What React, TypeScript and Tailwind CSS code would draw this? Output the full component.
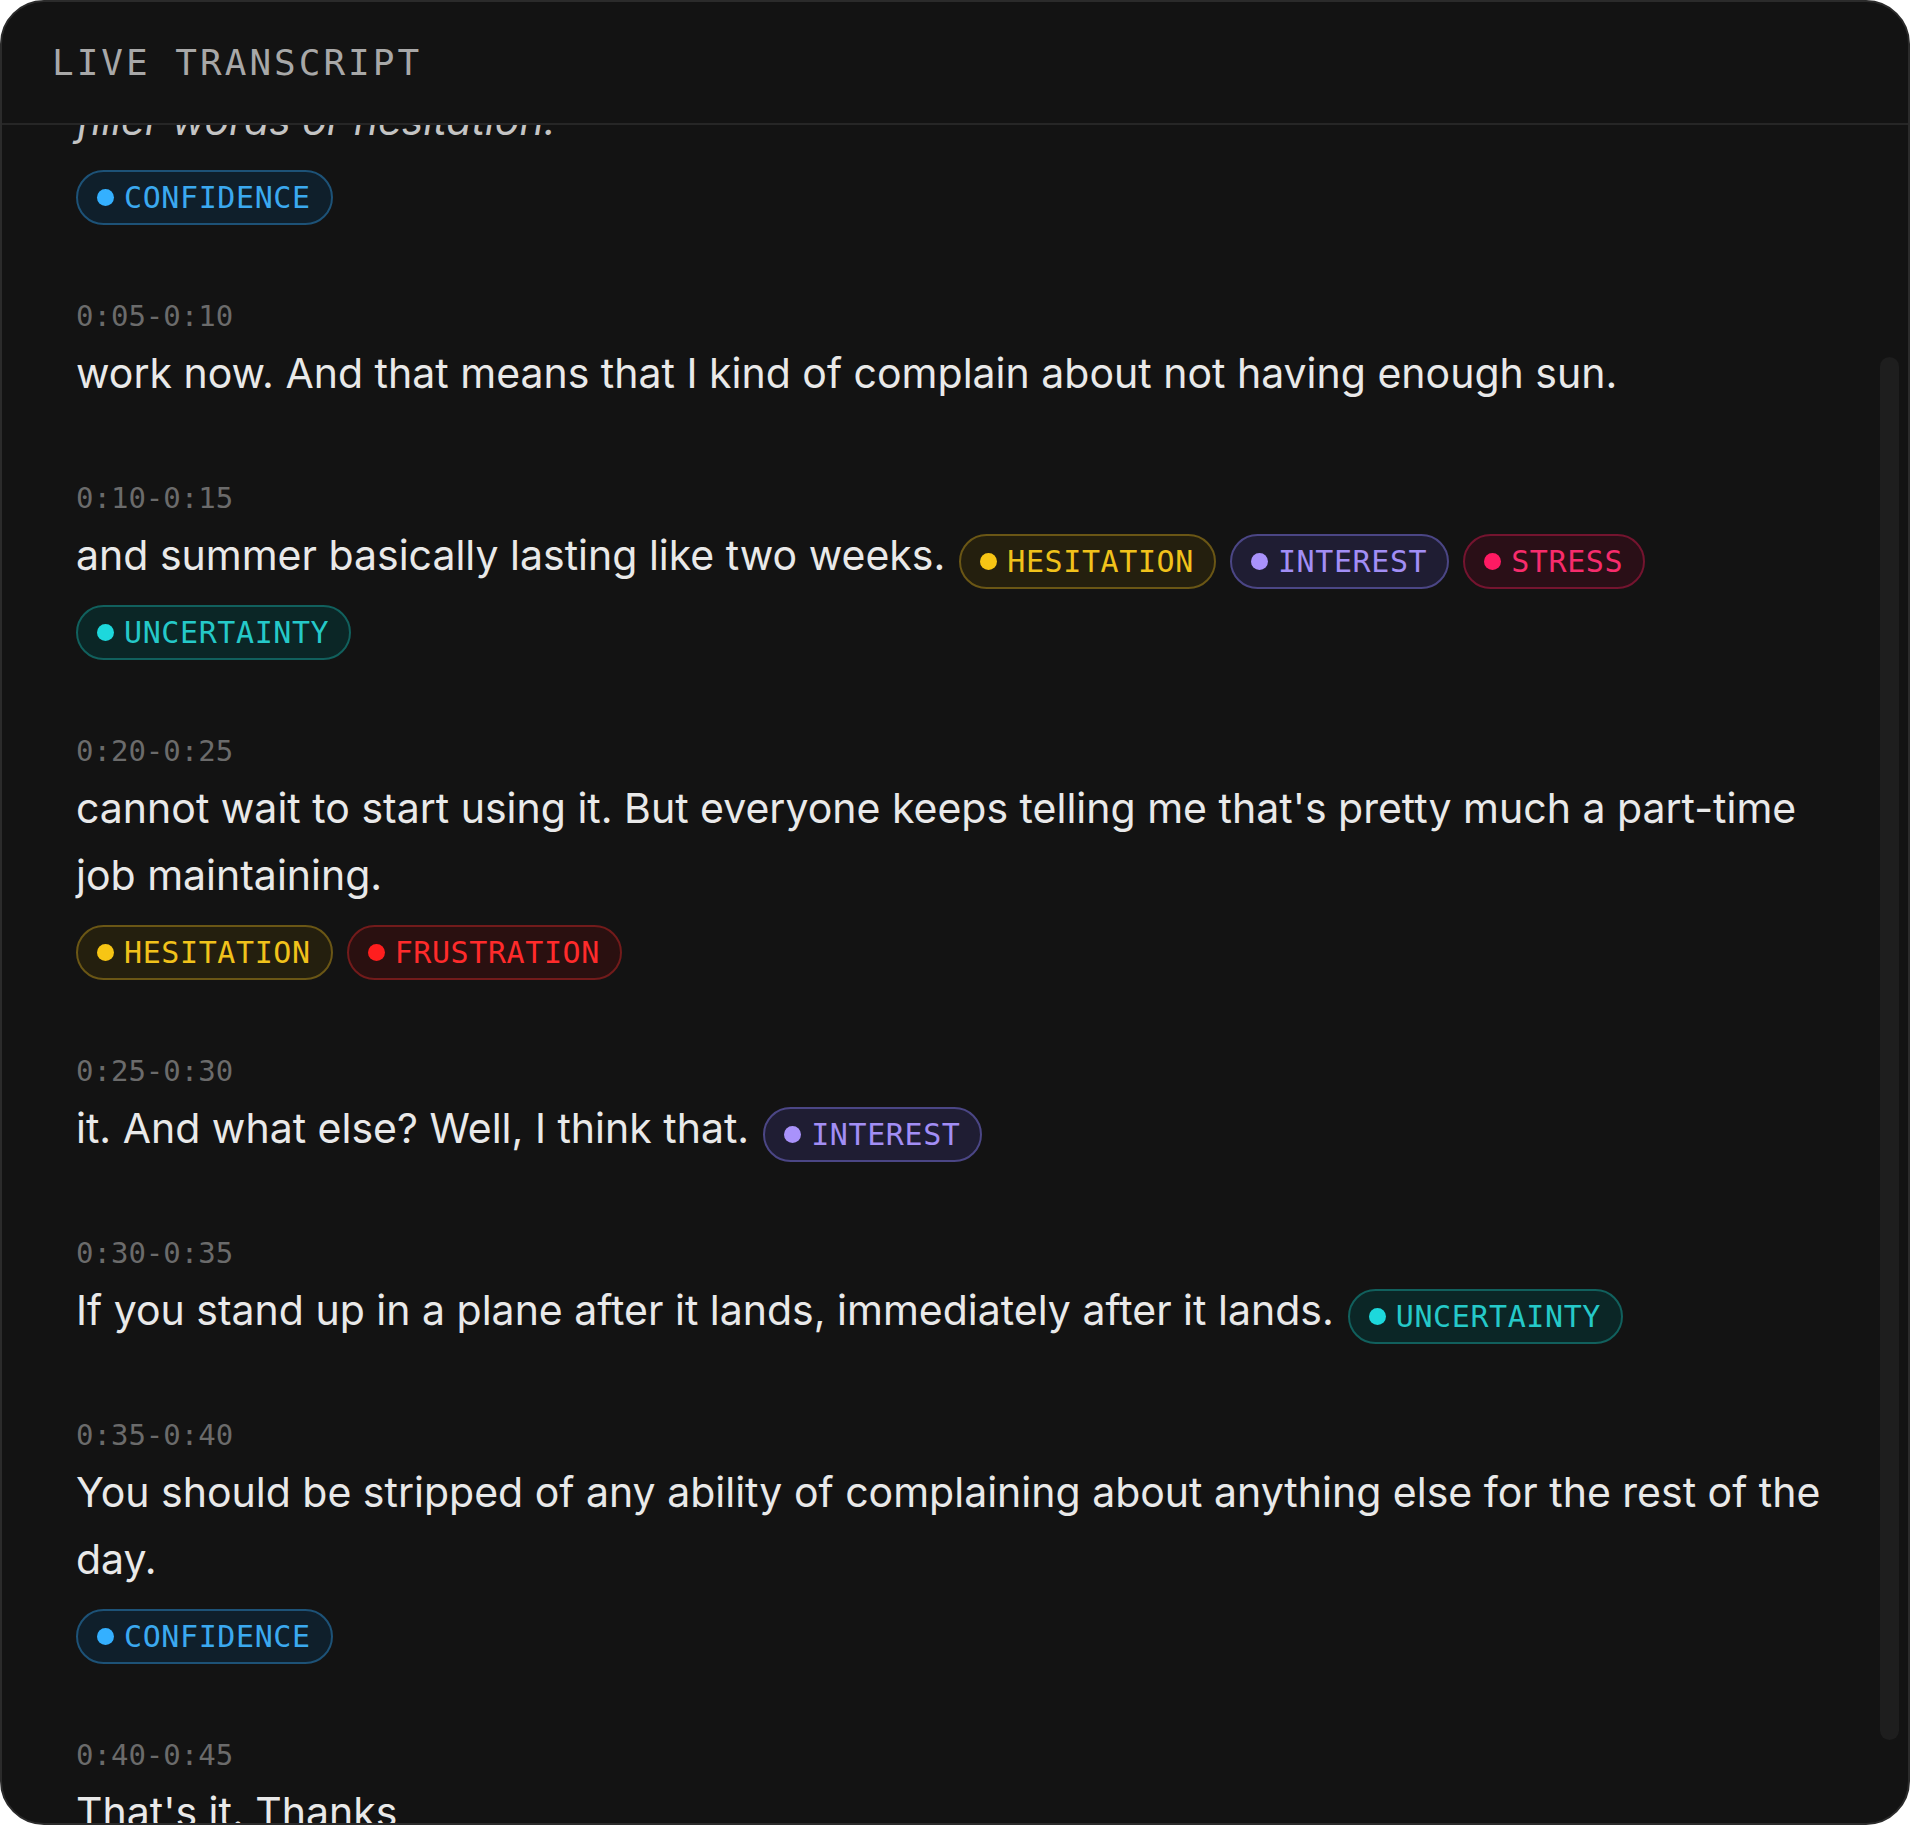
import React from "react";

type Tone = "confidence" | "uncertainty" | "hesitation" | "interest" | "stress" | "frustration";

const toneStyles: Record<Tone, { box: string; dot: string; label: string }> = {
  confidence: {
    box: "border-[#1d5277] bg-[#0f1f2b] text-[#3ba9f0]",
    dot: "bg-[#34b0ff]",
    label: "CONFIDENCE",
  },
  uncertainty: {
    box: "border-[#11605d] bg-[#0b2626] text-[#25c9c9]",
    dot: "bg-[#1dd8dc]",
    label: "UNCERTAINTY",
  },
  hesitation: {
    box: "border-[#6a5615] bg-[#241f0e] text-[#f1c21b]",
    dot: "bg-[#f7c514]",
    label: "HESITATION",
  },
  interest: {
    box: "border-[#4b4685] bg-[#1f1d33] text-[#a28ef5]",
    dot: "bg-[#a992fb]",
    label: "INTEREST",
  },
  stress: {
    box: "border-[#74142f] bg-[#2a0f17] text-[#f72c6c]",
    dot: "bg-[#ff1a63]",
    label: "STRESS",
  },
  frustration: {
    box: "border-[#721b1b] bg-[#2a1010] text-[#ff2b2b]",
    dot: "bg-[#ff1e1e]",
    label: "FRUSTRATION",
  },
};

const Badge = ({ tone }: { tone: Tone }) => {
  const s = toneStyles[tone];
  return (
    <span
      className={`inline-flex h-[55px] shrink-0 items-center gap-[10px] rounded-full border-2 pl-[19px] pr-[20px] font-['DejaVu_Sans_Mono',monospace] text-[30px] leading-none tracking-[0.6px] ${s.box}`}
    >
      <span className={`h-[17px] w-[17px] rounded-full ${s.dot}`} />
      {s.label}
    </span>
  );
};

type Segment = {
  time: string;
  text: React.ReactNode;
  tags: Tone[];
  muted?: boolean;
};

const segments: Segment[] = [
  {
    time: "0:00-0:05",
    text: (
      <>
        Speaking at a steady pace, clear and composed, with no
        <br />
        filler words or hesitation.
      </>
    ),
    tags: ["confidence"],
    muted: true,
  },
  {
    time: "0:05-0:10",
    text: "work now. And that means that I kind of complain about not having enough sun.",
    tags: [],
  },
  {
    time: "0:10-0:15",
    text: "and summer basically lasting like two weeks.",
    tags: ["hesitation", "interest", "stress", "uncertainty"],
  },
  {
    time: "0:20-0:25",
    text: "cannot wait to start using it. But everyone keeps telling me that's pretty much a part-time job maintaining.",
    tags: ["hesitation", "frustration"],
  },
  {
    time: "0:25-0:30",
    text: "it. And what else? Well, I think that.",
    tags: ["interest"],
  },
  {
    time: "0:30-0:35",
    text: "If you stand up in a plane after it lands, immediately after it lands.",
    tags: ["uncertainty"],
  },
  {
    time: "0:35-0:40",
    text: "You should be stripped of any ability of complaining about anything else for the rest of the day.",
    tags: ["confidence"],
  },
  {
    time: "0:40-0:45",
    text: "That's it. Thanks",
    tags: [],
  },
];

export default function App() {
  return (
    <div className="h-[1825px] w-[1910px] bg-white">
      <div className="flex h-full w-full flex-col overflow-hidden rounded-[44px] border-2 border-[#2b2b2b] bg-[#131313]">
        <div className="flex h-[123px] shrink-0 items-center border-b-2 border-[#262626] px-[50px]">
          <h1 className="font-['DejaVu_Sans_Mono',monospace] text-[36px] leading-none tracking-[3px] text-[#a8a8a8]">
            LIVE TRANSCRIPT
          </h1>
        </div>

        <div className="relative flex-1 overflow-hidden">
          {/* list is scrolled a little: first entry sits mostly under the header */}
          <div className="-mt-[147px] flex flex-col gap-[73px] pl-[74px] pr-[54px]">
            {segments.map((seg) => (
              <div key={seg.time} className="flex flex-col gap-[6px]">
                <div className="font-['DejaVu_Sans_Mono',monospace] text-[29px] leading-[36px] text-[#6b6b6b]">
                  {seg.time}
                </div>
                <div className="flex flex-wrap items-baseline gap-x-[14px] gap-y-[16px]">
                  <span
                    className={`font-['Inter',sans-serif] text-[41px] leading-[67px] ${
                      seg.muted ? "basis-full italic text-[#c4c4c4]" : "text-[#e9e9e9]"
                    }`}
                  >
                    {seg.text}
                  </span>
                  {seg.tags.map((t) => (
                    <Badge key={t} tone={t} />
                  ))}
                </div>
              </div>
            ))}
          </div>

          <div className="absolute right-[9px] top-[232px] h-[1383px] w-[19px] rounded-full bg-[#1e1e1e]" />
        </div>
      </div>
    </div>
  );
}
